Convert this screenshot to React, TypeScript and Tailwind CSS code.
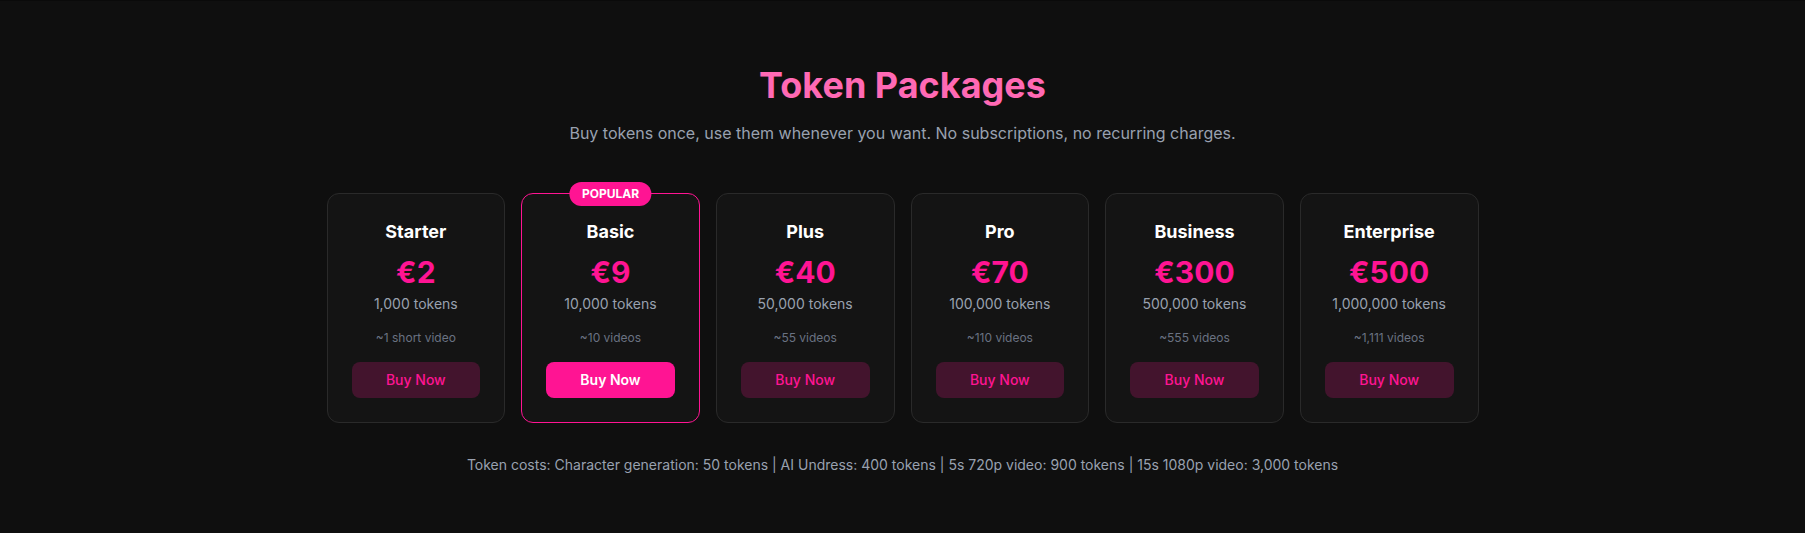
const packages = [
  { name: "Starter", price: "€2", tokens: "1,000 tokens", note: "~1 short video" },
  { name: "Basic", price: "€9", tokens: "10,000 tokens", note: "~10 videos", popular: true },
  { name: "Plus", price: "€40", tokens: "50,000 tokens", note: "~55 videos" },
  { name: "Pro", price: "€70", tokens: "100,000 tokens", note: "~110 videos" },
  { name: "Business", price: "€300", tokens: "500,000 tokens", note: "~555 videos" },
  { name: "Enterprise", price: "€500", tokens: "1,000,000 tokens", note: "~1,111 videos" },
];

const App = () => {
  return (
    <section
      className="w-full min-h-[533px] bg-[#0f0f0f] border-t border-[#0a0a0a] py-16"
      style={{ fontFamily: "Inter, 'Noto Sans', sans-serif" }}
    >
      <div className="max-w-6xl mx-auto">
        <h2 className="text-4xl font-bold text-center text-[#ff69b4] mb-4">Token Packages</h2>
        <p className="text-base text-center text-gray-400 mb-12">
          Buy tokens once, use them whenever you want. No subscriptions, no recurring charges.
        </p>

        <div className="grid grid-cols-6 gap-4">
          {packages.map((pkg) => (
            <div
              key={pkg.name}
              className={`relative rounded-xl bg-[#141414] border p-6 flex flex-col items-center text-center ${
                pkg.popular ? "border-[#ff1493]" : "border-[#2a2a2a]"
              }`}
            >
              {pkg.popular && (
                <span className="absolute -top-3 left-1/2 -translate-x-1/2 rounded-full bg-[#ff1493] px-3 py-1 text-xs font-bold leading-4 text-white">
                  POPULAR
                </span>
              )}
              <h3 className="text-lg font-bold text-white mb-2">{pkg.name}</h3>
              <div className="text-3xl font-bold text-[#ff1493] mb-1">{pkg.price}</div>
              <div className="text-sm text-gray-400 mb-4">{pkg.tokens}</div>
              <div className="text-xs text-gray-500 mb-4">{pkg.note}</div>
              <button
                className={`w-full rounded-lg py-2 text-sm ${
                  pkg.popular
                    ? "bg-[#ff1493] text-white font-semibold"
                    : "bg-[#ff1493]/20 text-[#ff1493] font-medium"
                }`}
              >
                Buy Now
              </button>
            </div>
          ))}
        </div>

        <p className="mt-8 text-sm text-center text-gray-400">
          Token costs: Character generation: 50 tokens | AI Undress: 400 tokens | 5s 720p video: 900 tokens | 15s
          1080p video: 3,000 tokens
        </p>
      </div>
    </section>
  );
};

export default App;
